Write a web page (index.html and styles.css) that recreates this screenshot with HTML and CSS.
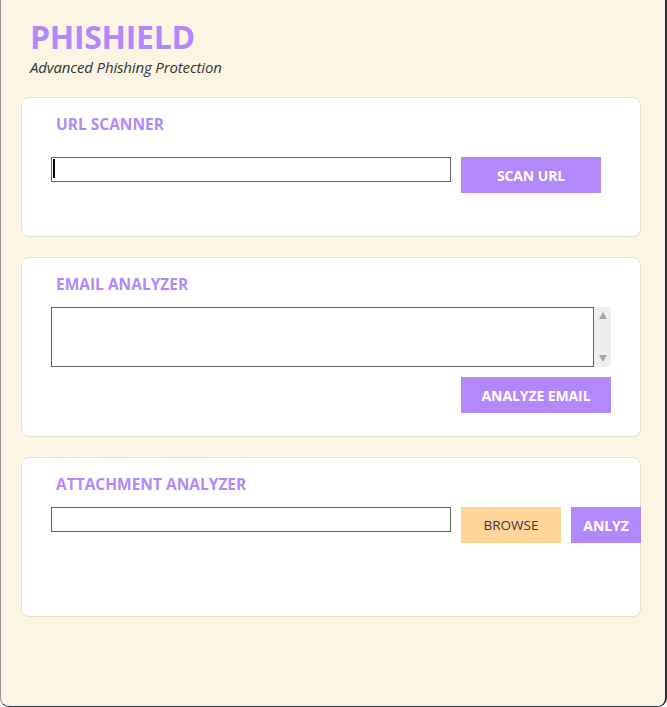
FILE: index.html
```html
<!DOCTYPE html>
<html lang="en">
<head>
<meta charset="utf-8">
<title>PhiShield</title>
<link rel="stylesheet" href="styles.css">
</head>
<body>
<div class="window">
  <header class="brand">
    <h1 class="brand-title">PHISHIELD</h1>
    <p class="brand-sub">Advanced Phishing Protection</p>
  </header>

  <section class="card card-url">
    <h2 class="card-title">URL SCANNER</h2>
    <div class="row row-url">
      <div class="field">
        <input class="text-input" type="text">
        <span class="caret"></span>
      </div>
      <button class="btn btn-primary btn-scan">SCAN URL</button>
    </div>
  </section>

  <section class="card card-email">
    <h2 class="card-title">EMAIL ANALYZER</h2>
    <div class="textarea-wrap">
      <textarea class="text-area"></textarea>
      <div class="scrollbar">
        <span class="arrow arrow-up"></span>
        <span class="arrow arrow-down"></span>
      </div>
    </div>
    <div class="row row-end">
      <button class="btn btn-primary btn-analyze">ANALYZE EMAIL</button>
    </div>
  </section>

  <section class="card card-attach">
    <h2 class="card-title">ATTACHMENT ANALYZER</h2>
    <div class="row">
      <input class="text-input" type="text">
      <button class="btn btn-browse">BROWSE</button>
      <button class="btn btn-primary btn-anlyz">ANLYZ</button>
    </div>
  </section>
</div>
</body>
</html>
```

FILE: styles.css
```css
* { box-sizing: border-box; }

html, body {
  margin: 0;
  padding: 0;
  background: #ffffff;
}

body {
  font-family: "Open Sans", "Noto Sans", sans-serif;
}

.window {
  width: 667px;
  height: 707px;
  background: #fdf5e3;
  border-left: 1px solid #8f8f8f;
  border-right: 2px solid #2e2e2e;
  border-bottom: 1px solid #2e2e2e;
  border-radius: 0 0 9px 9px;
  padding: 18px 24px 0 20px;
  display: flex;
  flex-direction: column;
  gap: 20px;
}

.brand {
  padding-left: 9px;
}

.brand-title {
  margin: 0;
  font-size: 32px;
  line-height: 38px;
  font-weight: 700;
  color: #b388fb;
  letter-spacing: -0.3px;
}

.brand-sub {
  margin: 1px 0 0 0;
  font-size: 15px;
  line-height: 20px;
  font-style: italic;
  color: #333333;
  letter-spacing: -0.15px;
}

.card {
  width: 620px;
  background: #ffffff;
  border: 1px solid #e4e0d6;
  border-radius: 8px;
  padding: 16px 29px 0 29px;
}

.card-url { height: 140px; }
.card-email { height: 180px; }
.card-attach { height: 160px; }

.card-title {
  margin: 0 0 0 5px;
  font-size: 15.5px;
  line-height: 20px;
  font-weight: 700;
  color: #b388fb;
  letter-spacing: 0;
}

.row {
  display: flex;
  align-items: flex-start;
  gap: 10px;
  margin-top: 13px;
}

.row-url { margin-top: 23px; }

.row-end {
  justify-content: flex-end;
  margin-top: 10px;
}

.field {
  position: relative;
  display: flex;
  flex-shrink: 0;
}

.text-input {
  width: 400px;
  height: 25px;
  flex-shrink: 0;
  border: 1px solid #646464;
  border-radius: 0;
  background: #fff;
  padding: 0 4px;
  margin: 0;
  outline: none;
  font-family: inherit;
}

.caret {
  position: absolute;
  left: 2px;
  top: 2px;
  width: 2px;
  height: 19px;
  background: #000;
}

.textarea-wrap {
  display: flex;
  margin-top: 13px;
}

.text-area {
  width: 543px;
  height: 60px;
  border: 1px solid #646464;
  border-radius: 0;
  margin: 0;
  padding: 4px;
  resize: none;
  outline: none;
  font-family: inherit;
}

.scrollbar {
  width: 17px;
  height: 60px;
  background: #efefef;
  display: flex;
  flex-direction: column;
  justify-content: space-between;
  align-items: center;
  padding: 5px 0;
}

.arrow {
  width: 0;
  height: 0;
  border-left: 4px solid transparent;
  border-right: 4px solid transparent;
}

.arrow-up { border-bottom: 7px solid #a3a3a3; }
.arrow-down { border-top: 7px solid #a3a3a3; }

.btn {
  height: 36px;
  border: none;
  border-radius: 0;
  margin: 0;
  padding: 0;
  font-family: inherit;
  font-size: 14px;
  cursor: pointer;
  flex-shrink: 0;
}

.btn-primary {
  background: #b388fb;
  color: #ffffff;
  font-weight: 700;
  letter-spacing: -0.1px;
}

.btn-scan { width: 140px; }
.btn-analyze { width: 150px; }
.btn-anlyz { width: 70px; }

.btn-browse {
  width: 100px;
  background: #ffd59a;
  color: #3a3a3a;
  font-weight: 400;
  font-size: 13.5px;
}
```
